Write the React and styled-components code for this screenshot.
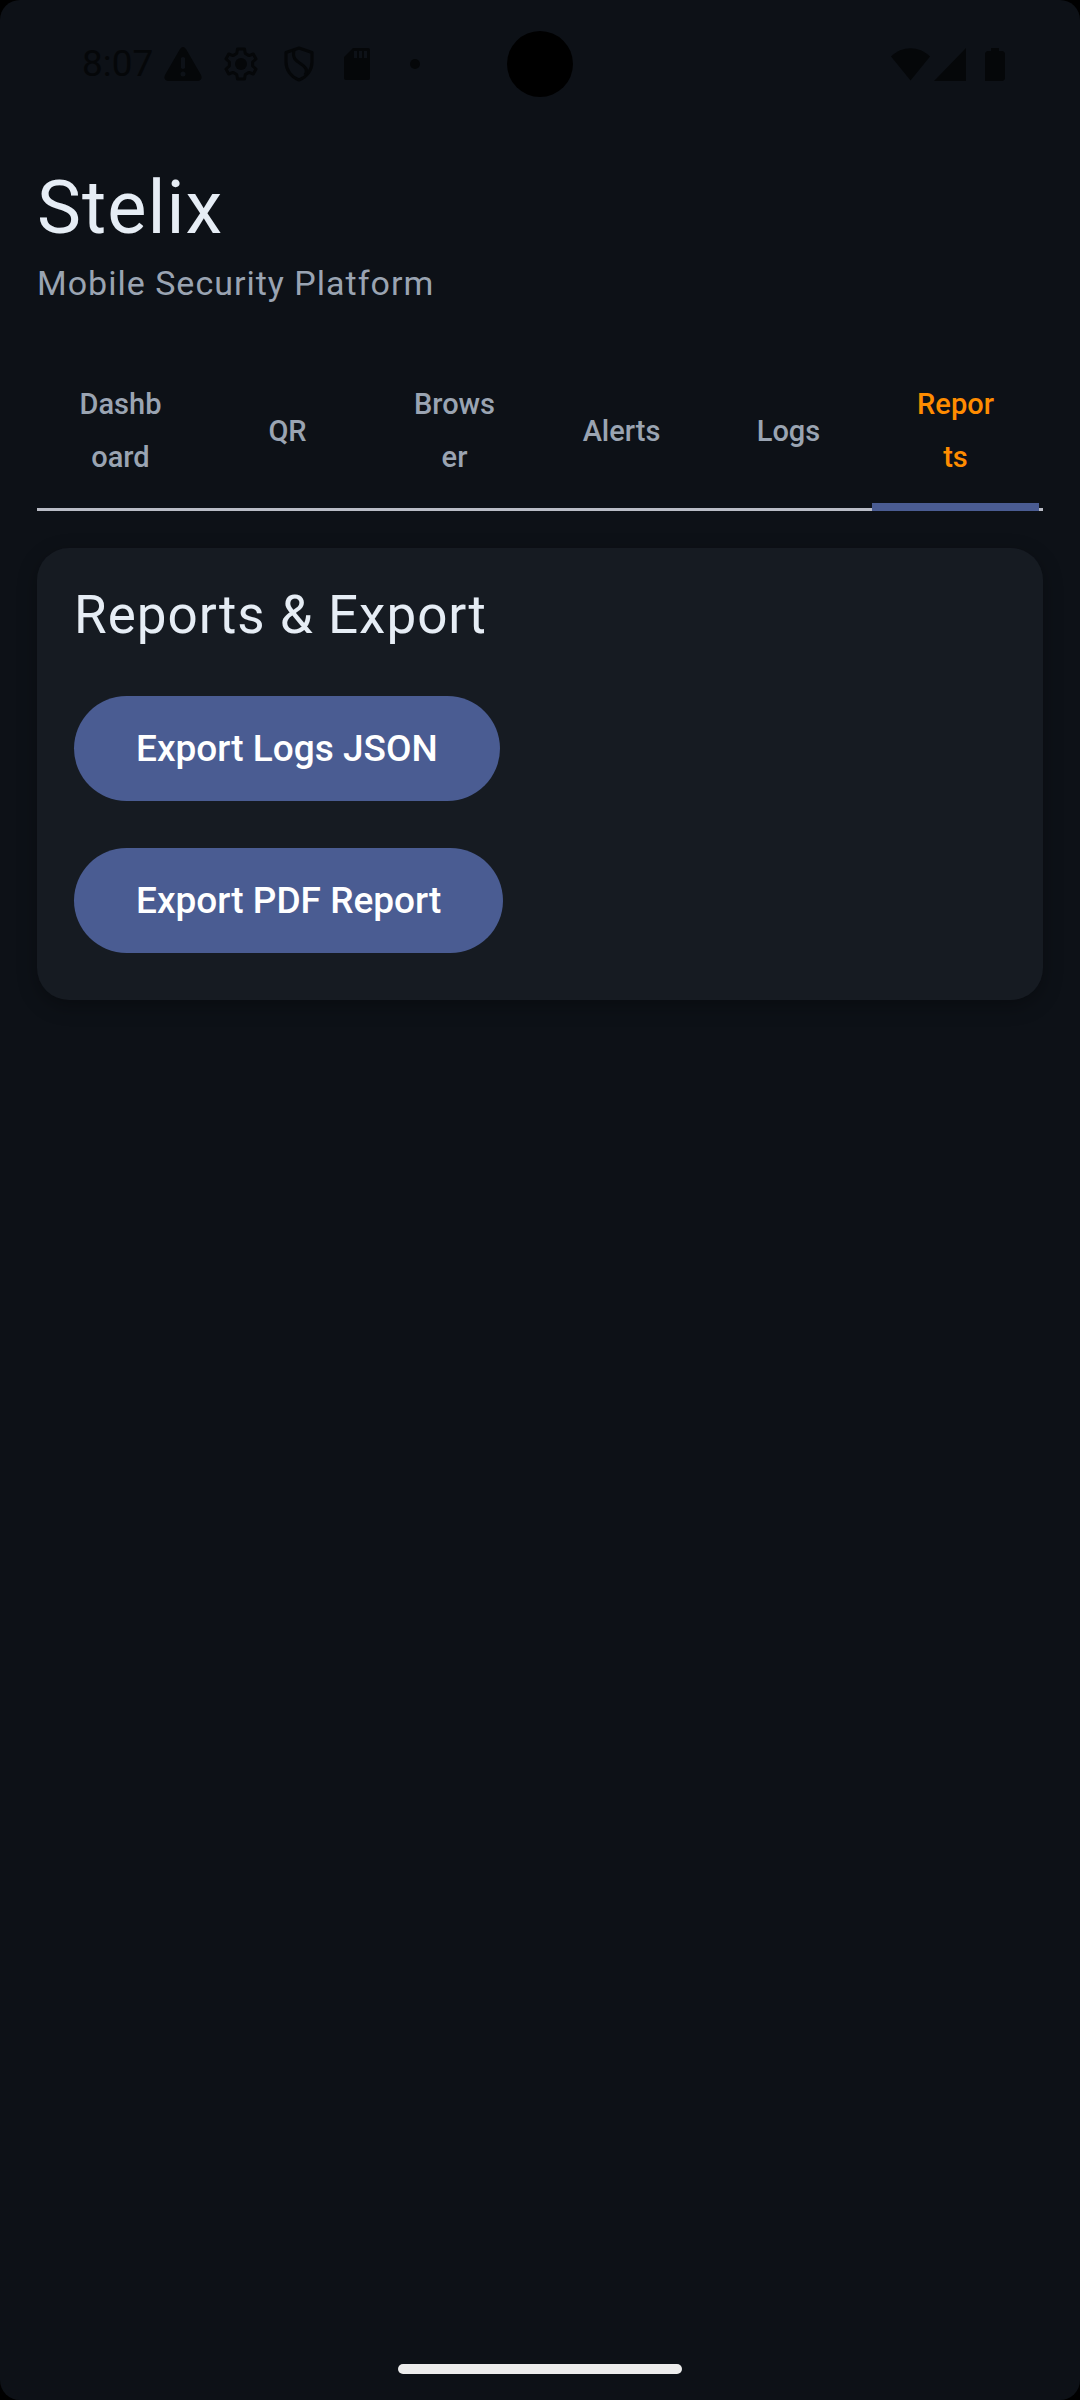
import React, { useState } from "react";
import styled, { createGlobalStyle } from "styled-components";

const GlobalStyle = createGlobalStyle`
  *, *::before, *::after { box-sizing: border-box; }
  body {
    margin: 0;
    background: #000;
    font-family: Roboto, "Noto Sans", sans-serif;
    color: #e6edf5;
  }
  h1, h2, p { margin: 0; font-weight: 400; letter-spacing: 1px; }
  button { font-family: inherit; border: 0; margin: 0; cursor: pointer; }
`;

const Screen = styled.div`
  position: relative;
  display: flex;
  flex-direction: column;
  min-height: 100vh;
  background: #0d1117;
  border-radius: 20px;
  overflow: hidden;
`;

const StatusBar = styled.div`
  display: flex;
  align-items: center;
  justify-content: space-between;
  height: 128px;
  padding: 0 75px 0 82px;
  color: #050709;
`;

const StatusGroup = styled.div`
  display: flex;
  align-items: center;
  gap: ${(p) => p.$gap || 0}px;
`;

const Clock = styled.time`
  min-width: 72px;
  font-size: 37px;
  line-height: 44px;
`;

const Notice = styled.span`
  display: flex;
  justify-content: center;
  width: 58px;
`;

const Battery = styled.span`
  display: flex;
  padding-left: 15px;
`;

const Camera = styled.div`
  position: absolute;
  top: 31px;
  left: 50%;
  width: 66px;
  height: 66px;
  margin-left: -33px;
  border-radius: 50%;
  background: #000;
`;

const Content = styled.main`
  flex: 1;
  display: flex;
  flex-direction: column;
  gap: 37px;
  padding: 37px;
`;

const Title = styled.h1`
  font-size: 74px;
  line-height: 86px;
`;

const Subtitle = styled.p`
  font-size: 34px;
  line-height: 64px;
  color: #9aa4b2;
`;

const Tabs = styled.div`
  display: grid;
  grid-template-columns: repeat(6, 1fr);
  border-bottom: 3px solid #b9bcc6;
  padding-right: 4px;
`;

const Tab = styled.button`
  display: flex;
  align-items: center;
  justify-content: center;
  min-width: 0;
  padding: 26px 42px 19px;
  margin-bottom: -3px;
  border-bottom: 8px solid ${(p) => (p["aria-selected"] ? "#4a5c92" : "transparent")};
  background: none;
  color: ${(p) => (p["aria-selected"] ? "#ff8c00" : "#9aa4b2")};
  font-size: 29px;
  font-weight: 500;
  line-height: 53px;
  text-align: center;
  overflow-wrap: anywhere;
`;

const Card = styled.section`
  display: flex;
  flex-direction: column;
  align-items: flex-start;
  gap: 47px;
  padding: 36px 37px 47px;
  border-radius: 32px;
  background: #161b22;
  box-shadow: 0 6px 20px rgba(0, 0, 0, 0.3);
`;

const CardTitle = styled.h2`
  padding-bottom: 2px;
  font-size: 53px;
  line-height: 63px;
`;

const Action = styled.button`
  height: 105px;
  padding: 0 62px;
  border-radius: 53px;
  background: #4a5c92;
  color: #fff;
  font-size: 37px;
  font-weight: 500;
  line-height: 53px;
`;

const HomeBar = styled.div`
  align-self: center;
  width: 284px;
  height: 10px;
  margin-bottom: 26px;
  border-radius: 5px;
  background: #ececec;
`;

const Glyph = ({ w, h, children }) => (
  <svg width={w} height={h} viewBox={`0 0 ${w} ${h}`} fill="currentColor" aria-hidden="true">
    {children}
  </svg>
);

const WarningIcon = () => (
  <Glyph w={38} h={34}>
    <path
      fillRule="evenodd"
      d="M16 2Q19 -2 22 2L37 28Q39 33 34 34H4Q-1 33 1 28ZM17 11V21Q19 23 21 21V11Q19 9 17 11ZM19 24.5A2.5 2.5 0 1 0 19 29.5A2.5 2.5 0 1 0 19 24.5Z"
    />
  </Glyph>
);

const GearIcon = () => (
  <Glyph w={34} h={34}>
    <path
      d="M13.5 2H20.5L21.3 6.5L25 8.6L29.3 7L32 12L28.6 15V19L32 22L29.3 27L25 25.4L21.3 27.5L20.5 32H13.5L12.7 27.5L9 25.4L4.7 27L2 22L5.4 19V15L2 12L4.7 7L9 8.6L12.7 6.5Z"
      fill="none"
      stroke="currentColor"
      strokeWidth="3"
      strokeLinejoin="round"
    />
    <circle cx="17" cy="17" r="6" />
  </Glyph>
);

const ShieldIcon = () => (
  <Glyph w={30} h={36}>
    <g fill="none" stroke="currentColor" strokeWidth="3.2" strokeLinejoin="round">
      <path d="M15 2L28 6.5V16C28 24 23 31 15 34C7 31 2 24 2 16V6.5Z" />
      <path d="M10 4C8 12 12 15 17 18C22 21 24 24 21 29" />
    </g>
  </Glyph>
);

const SdCardIcon = () => (
  <Glyph w={26} h={32}>
    <path
      fillRule="evenodd"
      d="M9 0H24Q26 0 26 2V30Q26 32 24 32H2Q0 32 0 30V9ZM10 3V10H13V3ZM15 3V10H18V3ZM20 3V10H23V3Z"
    />
  </Glyph>
);

const DotIcon = () => (
  <Glyph w={10} h={10}>
    <circle cx="5" cy="5" r="5" />
  </Glyph>
);

const WifiIcon = () => (
  <Glyph w={39} h={33}>
    <path d="M0 8.5C11 -2.5 28 -2.5 39 8.5L19.5 32.5Z" />
  </Glyph>
);

const SignalIcon = () => (
  <Glyph w={32} h={33}>
    <path d="M32 0V33H0Z" />
  </Glyph>
);

const BatteryIcon = () => (
  <Glyph w={20} h={33}>
    <path d="M6 0H14V3H18L20 5V31L18 33H0V5L2 3H6Z" />
  </Glyph>
);

const notices = [WarningIcon, GearIcon, ShieldIcon, SdCardIcon, DotIcon];
const tabs = ["Dashboard", "QR", "Browser", "Alerts", "Logs", "Reports"];

export default function App() {
  const [active, setActive] = useState("Reports");

  return (
    <Screen>
      <GlobalStyle />
      <StatusBar>
        <StatusGroup>
          <Clock>8:07</Clock>
          {notices.map((Icon, i) => (
            <Notice key={i}>
              <Icon />
            </Notice>
          ))}
        </StatusGroup>
        <StatusGroup $gap={4}>
          <WifiIcon />
          <SignalIcon />
          <Battery>
            <BatteryIcon />
          </Battery>
        </StatusGroup>
      </StatusBar>
      <Camera />
      <Content>
        <header>
          <Title>Stelix</Title>
          <Subtitle>Mobile Security Platform</Subtitle>
        </header>
        <Tabs role="tablist">
          {tabs.map((name) => (
            <Tab
              key={name}
              type="button"
              role="tab"
              aria-selected={name === active}
              onClick={() => setActive(name)}
            >
              {name}
            </Tab>
          ))}
        </Tabs>
        <Card>
          <CardTitle>Reports &amp; Export</CardTitle>
          <Action type="button">Export Logs JSON</Action>
          <Action type="button">Export PDF Report</Action>
        </Card>
      </Content>
      <HomeBar />
    </Screen>
  );
}
